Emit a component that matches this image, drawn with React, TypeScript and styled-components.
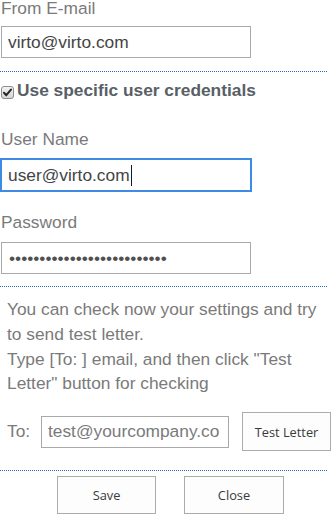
import styled, { createGlobalStyle } from 'styled-components'

const GlobalStyle = createGlobalStyle`
  html, body {
    margin: 0;
    padding: 0;
    background: #ffffff;
  }
  body {
    font-family: "Liberation Sans", Arial, sans-serif;
    overflow: hidden;
  }
`

const Page = styled.div`
  width: 331px;
  display: flex;
  flex-direction: column;
`

const Section = styled.div`
  display: flex;
  flex-direction: column;
  padding-left: 1px;
`

const Label = styled.div<{ $top: number; $bottom?: number }>`
  margin-top: ${({ $top }) => $top}px;
  margin-bottom: ${({ $bottom }) => $bottom ?? 10}px;
  font-size: 17.33px;
  line-height: 20px;
  color: #7a7a7a;
`

const FieldBox = styled.div<{ $focused?: boolean; $width?: number; $muted?: boolean }>`
  box-sizing: border-box;
  flex: none;
  width: ${({ $width }) => $width ?? 250}px;
  height: 32px;
  padding: 0 6px;
  display: flex;
  align-items: center;
  border: 1px solid ${({ $focused }) => ($focused ? '#3f8ae4' : '#a9a9a9')};
  box-shadow: ${({ $focused }) => ($focused ? '0 0 0 1px #3f8ae4' : 'none')};
  background: #ffffff;
  font-size: 17.33px;
  color: ${({ $muted }) => ($muted ? '#7a7a7a' : '#444444')};
  white-space: nowrap;
  overflow: hidden;
`

const Caret = styled.span`
  display: inline-block;
  width: 1px;
  height: 21px;
  background: #1a1a1a;
  margin-left: 1px;
`

const Dots = styled.span`
  font-size: 17.33px;
  color: #505050;
  padding-left: 1px;
`

const Divider = styled.div<{ $top: number; $bottom: number }>`
  width: 327px;
  height: 1px;
  margin: ${({ $top, $bottom }) => `${$top}px 0 ${$bottom}px`};
  background-image: linear-gradient(to right, #2f6ac8 50%, transparent 50%);
  background-size: 2px 1px;
  background-repeat: repeat-x;
`

const CheckRow = styled.label`
  display: flex;
  align-items: flex-start;
  gap: 3px;
  padding-left: 1px;
`

const CheckBox = styled.span`
  margin-top: 6px;
  width: 13px;
  height: 13px;
  flex: none;
  display: flex;
`

const CheckText = styled.span`
  font-size: 17.33px;
  line-height: 20px;
  font-weight: bold;
  color: #595f66;
`

const Note = styled.p`
  margin: 0;
  padding: 0 0 0 7px;
  width: 320px;
  font-size: 17.33px;
  line-height: 24.76px;
  color: #7a7a7a;
`

const ToRow = styled.div`
  display: flex;
  align-items: center;
  margin-top: 16px;
  padding-left: 7px;
`

const ToLabel = styled.span`
  font-size: 17.33px;
  color: #7a7a7a;
  width: 34px;
  flex: none;
`

const Button = styled.button<{ $width: number; $height: number }>`
  box-sizing: border-box;
  width: ${({ $width }) => $width}px;
  height: ${({ $height }) => $height}px;
  padding: 0;
  border: 1px solid #ababab;
  background: #fdfdfd;
  font-family: "Open Sans", "Noto Sans", sans-serif;
  font-size: 12.8px;
  color: #3a3a3a;
  flex: none;
`

const TestButton = styled(Button)`
  margin-left: 13px;
`

const Footer = styled.div`
  display: flex;
  gap: 28px;
  padding-left: 57px;
`

function CheckMark() {
  return (
    <svg width="13" height="13" viewBox="0 0 13 13">
      <defs>
        <linearGradient id="cbg" x1="0" y1="0" x2="0" y2="1">
          <stop offset="0" stopColor="#f4f4f4" />
          <stop offset="1" stopColor="#d4d4d4" />
        </linearGradient>
      </defs>
      <rect x="0.5" y="0.5" width="12" height="12" rx="2.5" fill="url(#cbg)" stroke="#8e8e8e" />
      <path d="M3 6.8 L5.3 9.2 L10 3.6" fill="none" stroke="#262626" strokeWidth="2" strokeLinecap="round" strokeLinejoin="round" />
    </svg>
  )
}

export default function App() {
  return (
    <Page>
      <GlobalStyle />
      <Section>
        <Label $top={-2} $bottom={8}>From E-mail</Label>
        <FieldBox>virto@virto.com</FieldBox>
      </Section>
      <Divider $top={13} $bottom={8} />
      <CheckRow>
        <CheckBox>
          <CheckMark />
        </CheckBox>
        <CheckText>Use specific user credentials</CheckText>
      </CheckRow>
      <Section>
        <Label $top={29}>User Name</Label>
        <FieldBox $focused>
          user@virto.com
          <Caret />
        </FieldBox>
        <Label $top={21}>Password</Label>
        <FieldBox>
          <Dots>{'•'.repeat(26)}</Dots>
        </FieldBox>
      </Section>
      <Divider $top={12} $bottom={10} />
      <Note>
        You can check now your settings and try to send test letter.
        <br />
        Type [To: ] email, and then click "Test Letter" button for checking
      </Note>
      <ToRow>
        <ToLabel>To:</ToLabel>
        <FieldBox $width={188} $muted>test@yourcompany.co</FieldBox>
        <TestButton $width={89} $height={39}>Test Letter</TestButton>
      </ToRow>
      <Divider $top={19} $bottom={5} />
      <Footer>
        <Button $width={99} $height={38}>Save</Button>
        <Button $width={100} $height={38}>Close</Button>
      </Footer>
    </Page>
  )
}
